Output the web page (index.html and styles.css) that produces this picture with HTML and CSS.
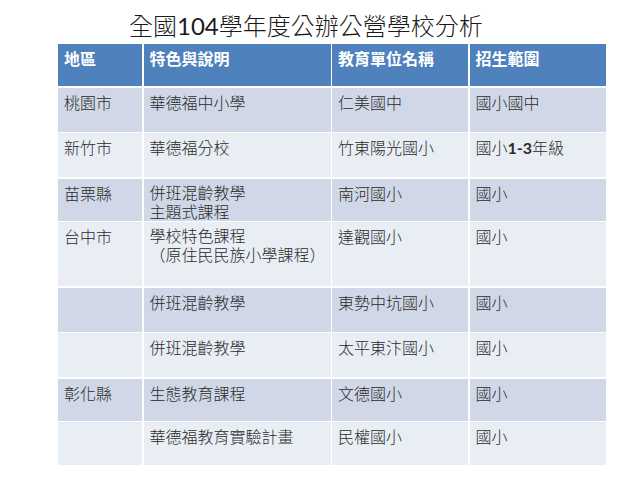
FILE: index.html
```html
<!DOCTYPE html>
<html lang="zh-Hant">
<head>
<meta charset="utf-8">
<title>全國104學年度公辦公營學校分析</title>
<link rel="stylesheet" href="styles.css">
</head>
<body>
<div class="slide">
  <h1 class="title">全國<span class="num">104</span>學年度公辦公營學校分析</h1>
  <div class="table">
    <div class="cell head">地區</div>
    <div class="cell head">特色與說明</div>
    <div class="cell head">教育單位名稱</div>
    <div class="cell head">招生範圍</div>

    <div class="cell dark">桃園市</div>
    <div class="cell dark">華德福中小學</div>
    <div class="cell dark">仁美國中</div>
    <div class="cell dark">國小國中</div>

    <div class="cell light">新竹市</div>
    <div class="cell light">華德福分校</div>
    <div class="cell light">竹東陽光國小</div>
    <div class="cell light">國小<span class="num">1-3</span>年級</div>

    <div class="cell dark">苗栗縣</div>
    <div class="cell dark"><div class="line">併班混齡教學</div><div class="line">主題式課程</div></div>
    <div class="cell dark">南河國小</div>
    <div class="cell dark">國小</div>

    <div class="cell light">台中市</div>
    <div class="cell light"><div class="line">學校特色課程</div><div class="line">（原住民民族小學課程）</div></div>
    <div class="cell light">達觀國小</div>
    <div class="cell light">國小</div>

    <div class="cell dark"></div>
    <div class="cell dark">併班混齡教學</div>
    <div class="cell dark">東勢中坑國小</div>
    <div class="cell dark">國小</div>

    <div class="cell light"></div>
    <div class="cell light">併班混齡教學</div>
    <div class="cell light">太平東汴國小</div>
    <div class="cell light">國小</div>

    <div class="cell dark">彰化縣</div>
    <div class="cell dark">生態教育課程</div>
    <div class="cell dark">文德國小</div>
    <div class="cell dark">國小</div>

    <div class="cell light"></div>
    <div class="cell light">華德福教育實驗計畫</div>
    <div class="cell light">民權國小</div>
    <div class="cell light">國小</div>
  </div>
</div>
</body>
</html>
```

FILE: styles.css
```css
html, body {
  margin: 0;
  padding: 0;
  background: #ffffff;
}

.slide {
  width: 638px;
  height: 479px;
  overflow: hidden;
  font-family: "Noto Sans CJK TC", "Noto Sans CJK SC", sans-serif;
}

.title {
  margin: 0;
  padding: 10px 0 0 129px;
  height: 34px;
  font-size: 24px;
  line-height: 30px;
  font-weight: 300;
  color: #1a1a1a;
  white-space: nowrap;
}

.title .num {
  font-family: "Lato", "Open Sans", sans-serif;
  font-weight: 400;
}

.table {
  margin-left: 58px;
  width: 547px;
  display: grid;
  grid-template-columns: 84px 187px 136px 136px;
  grid-template-rows: 42px 44px 44px 42px 64px 44px 44px 42px 43px;
  gap: 1.5px;
  background: #ffffff;
}

.cell {
  padding: 4px 7px 0 6px;
  font-size: 16px;
  line-height: 20px;
  font-weight: 300;
  color: #2b2b2b;
  white-space: nowrap;
}

.line {
  height: 19px;
  line-height: 19px;
}

.cell .num {
  font-family: "Lato", "Open Sans", sans-serif;
  font-weight: 700;
}

.head {
  background: #4f81bd;
  color: #ffffff;
  font-weight: 700;
}

.dark {
  background: #d0d8e8;
}

.light {
  background: #e9edf4;
}
```
